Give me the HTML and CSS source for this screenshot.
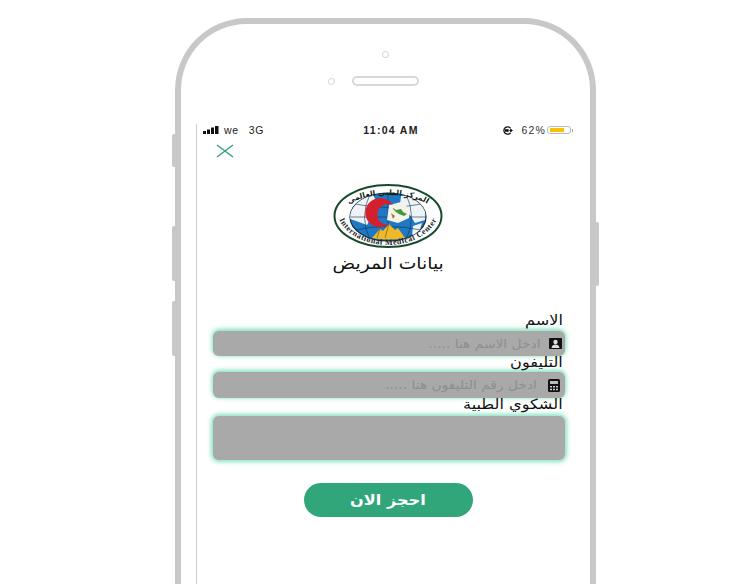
FILE: index.html
```html
<!DOCTYPE html>
<html lang="ar">
<head>
<meta charset="utf-8">
<title>بيانات المريض</title>
<link rel="stylesheet" href="styles.css">
</head>
<body>
<div class="device">
  <span class="side side-mute"></span>
  <span class="side side-up"></span>
  <span class="side side-down"></span>
  <span class="side side-power"></span>
  <div class="bezel">
    <span class="camera"></span>
    <div class="speaker-row">
      <span class="sensor"></span>
      <span class="speaker"></span>
    </div>
  </div>
  <div class="screen">
    <div class="status">
      <div class="status-left">
        <svg class="signal" width="17" height="8" viewBox="0 0 17 8"><rect x="0" y="5" width="3" height="3"/><rect x="4" y="3.500" width="3" height="4.500"/><rect x="8" y="1.500" width="3" height="6.500"/><rect x="12" y="0" width="3.500" height="8"/></svg>
        <span>we</span><span class="net">3G</span>
      </div>
      <div class="status-time">11:04 AM</div>
      <div class="status-right">
        <svg width="11" height="9" viewBox="0 0 11 9"><path d="M8.500 2.200A3.700 3.700 0 1 0 8.500 6.800" fill="none" stroke="#111" stroke-width="1.300"/><rect x="3" y="3.200" width="3.600" height="2.600" fill="#111"/><path d="M6.500 4.500h2.500M8.500 2.800l2 1.700-2 1.700z" fill="#111" stroke="#111" stroke-width=".6"/></svg>
        <span class="pct">62%</span>
        <span class="battery"><span class="battery-fill"></span></span>
        <span class="battery-tip"></span>
      </div>
    </div>
    <div class="content">
      <svg class="close" width="18" height="14" viewBox="0 0 18 14"><path d="M1 1l16 12M17 1L1 13" fill="none" stroke="#33a67b" stroke-width="1.500"/></svg>
      <svg class="logo" width="111" height="65" viewBox="0 0 111 65">
        <defs>
          <path id="arcTop" d="M7 32A48 21 0 0 1 103 32"/>
          <path id="arcBottom" d="M4 25A51 36 0 0 0 106 25"/>
          <clipPath id="globeClip"><ellipse cx="55" cy="33" rx="38" ry="24"/></clipPath>
        </defs>
        <ellipse cx="55" cy="32" rx="53.500" ry="31" fill="#fff" stroke="#17492c" stroke-width="2"/>
        <ellipse cx="55" cy="33" rx="38" ry="24" fill="#1f78c4" stroke="#16283a" stroke-width="1.200"/>
        <g clip-path="url(#globeClip)">
          <path d="M17 28l10-14 13-3 4 7-6 4 1 9-5 10-11-4-6-2zM68 12l13-1 12 14-1 11-10 3-5-8-7-3-3-8zM80 42l9-3-3 10-7 3z" fill="#eef3f8"/>
          <path d="M55 8v50M16 33h78M22 20q33 7 66 0M22 46q33-7 66 0M37 10q-11 23 0 46M73 10q11 23 0 46" fill="none" stroke="#16324d" stroke-width=".6"/>
        </g>
        <path d="M56 21l12-3 9 7-1 9-11 5-11-3z" fill="#f5f2ea"/>
        <path d="M60 24l3 2 5-1 2 3 4 2-3 2-5-2-3-2-3-3z" fill="#3f9a3b"/>
        <path d="M58 29l4 3-2 3z" fill="#a5792c"/>
        <path d="M60 21A15 14.500 0 1 0 55 41A11 10.500 0 1 1 60 21z" fill="#d3202c"/>
        <path d="M39 54l8-9 3 2 6-7 6 6 3-2 7 10q-17 3-33 0z" fill="#f0b92a"/>
        <path d="M47 45l-3 9M56 40l-4 14" fill="none" stroke="#8a6418" stroke-width=".8"/>
        <text class="logo-ar" text-anchor="middle"><textPath href="#arcTop" startOffset="50%">المركز الطبي العالمي</textPath></text>
        <text class="logo-en" text-anchor="middle"><textPath href="#arcBottom" startOffset="50%">International Medical Center</textPath></text>
      </svg>
      <h1 class="title"><span class="wide">بيانات المريض</span></h1>
      <form class="form" dir="rtl">
        <label class="label"><span class="wide">الاسم</span></label>
        <div class="field field-name">
          <svg width="13" height="11" viewBox="0 0 13 11"><rect width="13" height="11" rx="1" fill="#111"/><circle cx="6.500" cy="4" r="2.200" fill="#ddd"/><path d="M2.500 10c.5-3 2-3.600 4-3.600s3.500.6 4 3.600z" fill="#ddd"/></svg>
          <span class="hint wide">ادخل الاسم هنا .....</span>
        </div>
        <label class="label label-phone"><span class="wide">التليفون</span></label>
        <div class="field field-phone">
          <svg width="12" height="13" viewBox="0 0 12 13"><rect width="12" height="13" rx="1.500" fill="#111"/><rect x="2" y="2" width="8" height="3" fill="#bbb"/><path d="M2 7h2v1.500H2zM5 7h2v1.500H5zM8 7h2v1.500H8zM2 9.800h2v1.500H2zM5 9.800h2v1.500H5zM8 9.800h2v1.500H8z" fill="#ccc"/></svg>
          <span class="hint wide">ادخل رقم التليفون هنا .....</span>
        </div>
        <label class="label label-complaint"><span class="wide">الشكوي الطبية</span></label>
        <div class="field field-area"></div>
        <button type="button" class="submit"><span class="wide wide-center">احجز الان</span></button>
      </form>
    </div>
  </div>
</div>
</body>
</html>
```
FILE: styles.css
```css
* { box-sizing: border-box; }
html, body { margin: 0; height: 584px; overflow: hidden; background: #fff; }
body { font-family: "DejaVu Sans", sans-serif; color: #111; }

.device {
  position: relative;
  width: 421px;
  height: 566px;
  margin: 18px 0 0 175px;
  border: 6px solid #c8c8c8;
  border-bottom: 0;
  border-radius: 72px 72px 0 0;
}
.side { position: absolute; width: 4px; background: #c8c8c8; border-radius: 2px 0 0 2px; left: -9px; }
.side-mute { top: 110px; height: 33px; }
.side-up { top: 202px; height: 55px; }
.side-down { top: 277px; height: 55px; }
.side-power { left: auto; right: -9px; top: 198px; height: 64px; border-radius: 0 2px 2px 0; }

.bezel { height: 100px; display: flex; flex-direction: column; align-items: center; }
.camera {
  width: 7px; height: 7px; margin: 27px 0 0 0;
  border: 1.5px solid #d0d0d0; border-radius: 50%;
}
.speaker-row { display: flex; align-items: center; margin: 18px 0 0 -24px; gap: 17px; }
.sensor { width: 7px; height: 7px; border: 1.5px solid #d4d4d4; border-radius: 50%; }
.speaker { width: 67px; height: 10px; border: 2px solid #d8d8d8; border-radius: 5px; }

.screen {
  margin-left: 15px;
  width: 379px;
  height: 460px;
  border-left: 1px solid #cfcfcf;
}
.status {
  height: 12px;
  display: grid; grid-template-columns: 1fr auto 1fr;
  align-items: center;
  padding: 0 2px 0 6px;
  font: 10.500px/12px "Liberation Sans", sans-serif;
  letter-spacing: .7px;
}
.status-left { display: flex; align-items: center; gap: 4px; color: #222; }
.net { margin-left: 6px; }
.signal { fill: #111; }
.status-time { font-weight: 700; letter-spacing: 1.300px; color: #222; padding-left: 6px; }
.status-right { display: flex; align-items: center; justify-content: flex-end; color: #333; }
.pct { margin: 0 1px 0 8px; letter-spacing: 1.200px; }
.battery { width: 24px; height: 8px; border: 1px solid #bbb; border-radius: 3px; padding: 1px 2px; display: block; }
.battery-fill { display: block; width: 14px; height: 100%; background: #f7c300; }
.battery-tip { width: 1px; height: 3px; margin-left: 1px; background: #aaa; }

.content { padding: 8px 10px 0 16px; display: flex; flex-direction: column; }
.close { display: block; margin-left: 3px; }
.logo { display: block; margin: 26px 0 0 120px; }
.logo-ar { font: 700 7.500px "DejaVu Sans", sans-serif; fill: #101f14; }
.logo-en { font: 700 8px "Liberation Serif", serif; fill: #14241a; letter-spacing: .55px; }

.wide { display: inline-block; transform: scaleX(1.15); transform-origin: right center; }
.wide-center { transform-origin: center; }

.title { margin: 6px 0 0 0; font-size: 16.300px; font-weight: 400; line-height: 18px; text-align: right; padding-right: 121px; color: #111; }

.form { margin-top: 41px; display: flex; flex-direction: column; }
.label { display: block; height: 17px; font-size: 14px; line-height: 13px; padding-right: 2px; color: #111; }
.label-phone { height: 16px; line-height: 13px; }
.label-complaint { height: 18px; line-height: 13px; }
.field {
  display: flex; align-items: center; gap: 8px;
  padding-right: 3px;
  background: #a9a9a9;
  border-radius: 6px;
  box-shadow: 0 -1px 4px 1px rgba(84, 214, 164, .75);
}
.field svg { flex: none; }
.field-name { height: 25px; }
.field-phone { height: 26px; padding-right: 5px; }
.field-area { height: 44px; box-shadow: 0 0 4px 2px rgba(84, 214, 164, .7); }
.hint { font-size: 12px; color: #8e8e8e; }
.field-phone .hint { margin-right: 3px; }
.submit {
  align-self: center;
  width: 169px; height: 34px;
  margin: 23px 2px 0 0;
  border: 0; border-radius: 17px;
  background: #32a67b; color: #fff;
  font: 700 14px "DejaVu Sans", sans-serif;
}
```
